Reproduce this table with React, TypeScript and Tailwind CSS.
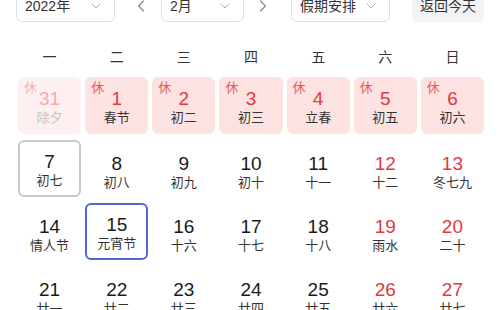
import { ChevronDown, ChevronLeft, ChevronRight } from 'lucide-react';

type Day = {
  n: number;
  lunar: string;
  rest?: boolean;
  faded?: boolean;
  weekend?: boolean;
  today?: boolean;
  selected?: boolean;
};

const weekdays = ['一', '二', '三', '四', '五', '六', '日'];

const days: Day[] = [
  { n: 31, lunar: '除夕', rest: true, faded: true },
  { n: 1, lunar: '春节', rest: true },
  { n: 2, lunar: '初二', rest: true },
  { n: 3, lunar: '初三', rest: true },
  { n: 4, lunar: '立春', rest: true },
  { n: 5, lunar: '初五', rest: true },
  { n: 6, lunar: '初六', rest: true },
  { n: 7, lunar: '初七', today: true },
  { n: 8, lunar: '初八' },
  { n: 9, lunar: '初九' },
  { n: 10, lunar: '初十' },
  { n: 11, lunar: '十一' },
  { n: 12, lunar: '十二', weekend: true },
  { n: 13, lunar: '冬七九', weekend: true },
  { n: 14, lunar: '情人节' },
  { n: 15, lunar: '元宵节', selected: true },
  { n: 16, lunar: '十六' },
  { n: 17, lunar: '十七' },
  { n: 18, lunar: '十八' },
  { n: 19, lunar: '雨水', weekend: true },
  { n: 20, lunar: '二十', weekend: true },
  { n: 21, lunar: '廿一' },
  { n: 22, lunar: '廿二' },
  { n: 23, lunar: '廿三' },
  { n: 24, lunar: '廿四' },
  { n: 25, lunar: '廿五' },
  { n: 26, lunar: '廿六', weekend: true },
  { n: 27, lunar: '廿七', weekend: true },
];

const Select = ({ label, w }: { label: string; w: string }) => (
  <div className={`${w} h-[32px] shrink-0 rounded-md border border-[#dcdfe6] flex items-center justify-between pl-[8px] pr-[10px] text-[14px] text-[#333]`}>
    <span>{label}</span>
    <ChevronDown size={16} strokeWidth={1.5} className="text-[#a8abb2]" />
  </div>
);

const DayCell = ({ d }: { d: Day }) => {
  const red = d.rest || d.weekend;
  let box = 'border-2 border-transparent';
  if (d.rest) box = d.faded ? 'bg-[#fef0f0]' : 'bg-[#fde2e2]';
  if (d.today) box = 'border-2 border-[#c6c8cc]';
  if (d.selected) box = 'border-2 border-[#4f6bd0]';
  return (
    <div className={`relative h-[57px] rounded-md flex flex-col items-center ${d.today || d.selected ? 'pt-[10px]' : 'pt-[12px]'} ${box}`}>
      {d.rest && (
        <span className={`absolute top-[2px] left-[6px] text-[13px] leading-[18px] ${d.faded ? 'text-[#f5b4b4]' : 'text-[#e8585c]'}`}>休</span>
      )}
      <span className={`text-[19px] leading-[20px] ${d.faded ? 'text-[#f5a9aa]' : red ? 'text-[#e3383d]' : 'text-[#1a1a1a]'}`}>
        {d.n}
      </span>
      <span className={`mt-[1px] text-[13px] leading-[16px] ${d.faded ? 'text-[#c4c4c4]' : 'text-[#333]'}`}>
        {d.lunar}
      </span>
    </div>
  );
};

export default function App() {
  return (
    <div
      className="w-[500px] h-[310px] overflow-hidden bg-white pl-[18px] pr-[16px]"
      style={{ fontFamily: '"Liberation Sans", "Noto Sans CJK SC", sans-serif' }}
    >
      <div className="mt-[-10px] ml-[-2px] h-[32px] flex items-center">
        <Select label="2022年" w="w-[99px]" />
        <ChevronLeft size={20} strokeWidth={1.5} className="ml-[16px] mr-[10px] text-[#8a8d93]" />
        <Select label="2月" w="w-[83px]" />
        <ChevronRight size={20} strokeWidth={1.5} className="ml-[9px] mr-[18px] text-[#8a8d93]" />
        <Select label="假期安排" w="w-[99px]" />
        <div className="ml-[22px] w-[72px] h-[32px] rounded-md bg-[#f2f3f5] flex items-center justify-center text-[14px] text-[#333]">
          返回今天
        </div>
      </div>

      <div className="mt-[22px] h-[26px] grid grid-cols-7 gap-x-[4px] items-center text-[14px] text-[#333]">
        {weekdays.map((w) => (
          <div key={w} className="text-center">{w}</div>
        ))}
      </div>

      <div className="mt-[7px] grid grid-cols-7 gap-x-[4px] gap-y-[6px]">
        {days.map((d) => (
          <DayCell key={`${d.n}-${d.lunar}`} d={d} />
        ))}
      </div>
    </div>
  );
}
